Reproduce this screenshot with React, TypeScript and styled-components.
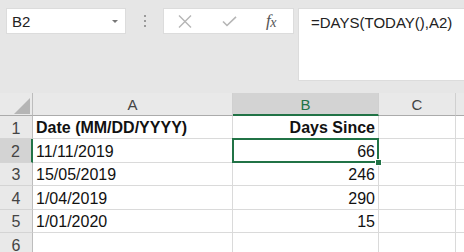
import React from "react";
import styled, { createGlobalStyle, css } from "styled-components";

const Global = createGlobalStyle`
  html, body { margin: 0; padding: 0; background: #e6e6e6; }
  body { width: 464px; height: 252px; overflow: hidden; font-family: "Liberation Sans", Arial, sans-serif; }
`;

const Page = styled.div`
  width: 464px;
  height: 252px;
  overflow: hidden;
  background: #e6e6e6;
`;

const Toolbar = styled.div`
  display: flex;
  align-items: flex-start;
  box-sizing: border-box;
  height: 93px;
  padding: 8px 0 0 6px;
`;

const NameBox = styled.div`
  box-sizing: border-box;
  width: 120px;
  height: 26px;
  background: #fff;
  border: 1px solid #dcdcdc;
  display: flex;
  align-items: center;
  justify-content: space-between;
  padding: 0 7px 0 5px;
  font-size: 15px;
  color: #222;
`;

const Caret = styled.span`
  width: 0;
  height: 0;
  border-left: 3px solid transparent;
  border-right: 3px solid transparent;
  border-top: 3px solid #777;
  margin-top: 1px;
`;

const Separator = styled.div`
  width: 37px;
  height: 26px;
  display: flex;
  flex-direction: column;
  align-items: center;
  justify-content: center;
  gap: 3px;
`;

const Dot = styled.span`
  width: 2px;
  height: 2px;
  background: #9a9a9a;
`;

const ButtonsBox = styled.div`
  box-sizing: border-box;
  width: 131px;
  height: 26px;
  background: #fff;
  border: 1px solid #dcdcdc;
  display: flex;
  align-items: center;
  padding-left: 14px;
`;

const IconSlot = styled.span<{ $w: number }>`
  width: ${(p) => p.$w}px;
  display: flex;
  align-items: center;
`;

const Fx = styled.span`
  font-family: "Liberation Serif", "Times New Roman", serif;
  font-style: italic;
  font-size: 17px;
  color: #555;
  letter-spacing: -0.5px;
  & > sub {
    font-size: 14px;
    vertical-align: -1px;
  }
`;

const FormulaBar = styled.div`
  box-sizing: border-box;
  flex: 1;
  margin-left: 4px;
  height: 73px;
  background: #fff;
  border: 1px solid #dcdcdc;
  border-right: none;
  padding: 5px 0 0 12px;
  font-size: 15px;
  line-height: 18px;
  color: #222;
  white-space: nowrap;
`;

const Sheet = styled.div`
  display: grid;
  grid-template-columns: 33px 200px 146px 77px 40px;
  grid-template-rows: 23px repeat(6, 23.4px);
  background: #fff;
  font-size: 16px;
`;

const headerBase = css`
  box-sizing: border-box;
  background: #e9e9e9;
  color: #444;
  display: flex;
  justify-content: center;
  align-items: flex-end;
  padding-bottom: 2px;
  font-size: 15px;
  line-height: 17px;
`;

const Corner = styled.div`
  ${headerBase};
  position: relative;
  border-right: 1px solid #bdbdbd;
  border-bottom: 1px solid #ababab;
`;

const CornerTriangle = styled.svg`
  position: absolute;
  left: 14px;
  top: 5px;
`;

const ColHeader = styled.div<{ $active?: boolean }>`
  ${headerBase};
  border-right: 1px solid #d0d0d0;
  border-bottom: 1px solid #ababab;
  ${(p) =>
    p.$active &&
    css`
      background: #d3d3d3;
      color: #217346;
      border-bottom: 2px solid #217346;
      padding-bottom: 1px;
    `}
`;

const RowHeader = styled.div<{ $active?: boolean }>`
  ${headerBase};
  align-items: center;
  padding: 2px 0 0;
  font-size: 16px;
  border-right: 1px solid #bdbdbd;
  border-bottom: 1px solid #d4d4d4;
  ${(p) =>
    p.$active &&
    css`
      background: #d3d3d3;
      border-right: 2px solid #217346;
    `}
`;

const Cell = styled.div<{ $align?: "left" | "right"; $bold?: boolean; $selected?: boolean }>`
  box-sizing: border-box;
  position: relative;
  display: flex;
  align-items: flex-end;
  justify-content: ${(p) => (p.$align === "right" ? "flex-end" : "flex-start")};
  padding: 0 3px 1px 3px;
  line-height: 19px;
  color: #111;
  font-weight: ${(p) => (p.$bold ? 700 : 400)};
  border-right: 1px solid #dadada;
  border-bottom: 1px solid #dadada;
  white-space: nowrap;
  ${(p) =>
    p.$selected &&
    css`
      &::after {
        content: "";
        position: absolute;
        left: -1px;
        top: -1px;
        right: -1px;
        bottom: -1px;
        border: 2px solid #217346;
        pointer-events: none;
      }
    `}
`;

const FillHandle = styled.span`
  position: absolute;
  right: -4px;
  bottom: -4px;
  width: 5px;
  height: 5px;
  background: #217346;
  border: 1px solid #fff;
  z-index: 2;
`;

type Row = { n: number; a: string; b: string; bold?: boolean };

const rows: Row[] = [
  { n: 1, a: "Date (MM/DD/YYYY)", b: "Days Since", bold: true },
  { n: 2, a: "11/11/2019", b: "66" },
  { n: 3, a: "15/05/2019", b: "246" },
  { n: 4, a: "1/04/2019", b: "290" },
  { n: 5, a: "1/01/2020", b: "15" },
  { n: 6, a: "", b: "" },
];

const columns = ["A", "B", "C", ""];

export default function App() {
  return (
    <Page>
      <Global />
      <Toolbar>
        <NameBox>
          <span>B2</span>
          <Caret />
        </NameBox>
        <Separator>
          <Dot />
          <Dot />
          <Dot />
        </Separator>
        <ButtonsBox>
          <IconSlot $w={44}>
            <svg width="14" height="13" viewBox="0 0 14 13">
              <path d="M1 0.5 L13 12.5 M13 0.5 L1 12.5" stroke="#b5b5b5" strokeWidth="1.4" fill="none" />
            </svg>
          </IconSlot>
          <IconSlot $w={44}>
            <svg width="15" height="11" viewBox="0 0 15 11">
              <path d="M1 5.5 L5 9.5 L14 0.8" stroke="#b5b5b5" strokeWidth="1.6" fill="none" />
            </svg>
          </IconSlot>
          <IconSlot $w={20}>
            <Fx>
              f<sub>x</sub>
            </Fx>
          </IconSlot>
        </ButtonsBox>
        <FormulaBar>=DAYS(TODAY(),A2)</FormulaBar>
      </Toolbar>
      <Sheet>
        <Corner>
          <CornerTriangle width="16" height="16" viewBox="0 0 16 16">
            <polygon points="0,16 16,16 16,0" fill="#b5b5b5" />
          </CornerTriangle>
        </Corner>
        {columns.map((c) => (
          <ColHeader key={c || "D"} $active={c === "B"}>
            {c}
          </ColHeader>
        ))}
        {rows.map((r) => (
          <React.Fragment key={r.n}>
            <RowHeader $active={r.n === 2}>{r.n}</RowHeader>
            <Cell $bold={r.bold}>{r.a}</Cell>
            <Cell $align="right" $bold={r.bold} $selected={r.n === 2}>
              {r.b}
              {r.n === 2 && <FillHandle />}
            </Cell>
            <Cell />
            <Cell />
          </React.Fragment>
        ))}
      </Sheet>
    </Page>
  );
}
